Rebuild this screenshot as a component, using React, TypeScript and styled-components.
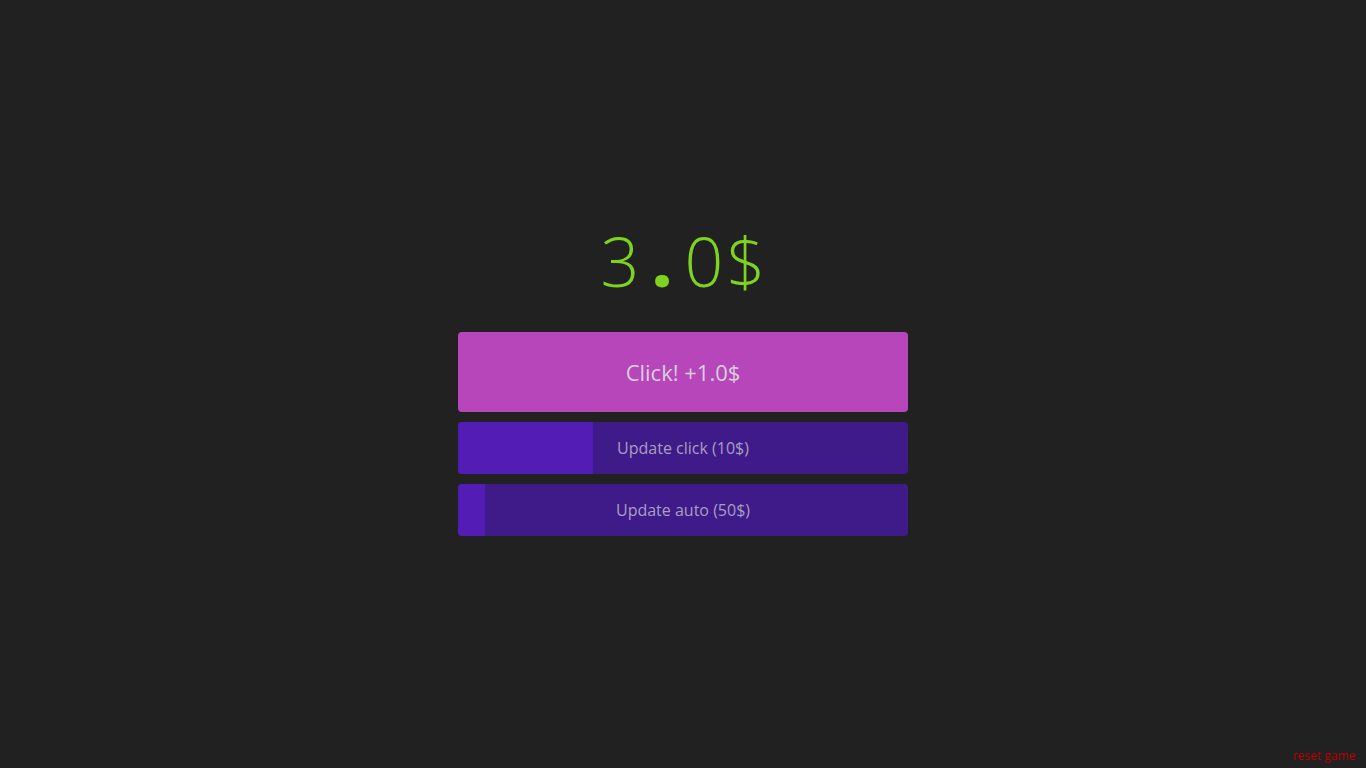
import React from "react";
import styled, { createGlobalStyle } from "styled-components";

const Global = createGlobalStyle`
  html, body { margin: 0; padding: 0; background: #212121; }
  body { font-family: "Open Sans", "Noto Sans", sans-serif; }
`;

const Page = styled.main`
  min-height: 100vh;
  display: flex;
  flex-direction: column;
  align-items: center;
  justify-content: center;
`;

const Money = styled.div`
  display: flex;
  font-family: "Open Sans", "Noto Sans", sans-serif;
  font-weight: 300;
  font-size: 68px;
  line-height: 58px;
  color: #7ed321;
  margin-bottom: 42px;
`;

const Cell = styled.span<{ $dot?: boolean }>`
  width: 42px;
  text-align: center;
  font-weight: ${(p) => (p.$dot ? 800 : 300)};
`;

const Stack = styled.div`
  width: 450px;
  display: flex;
  flex-direction: column;
  gap: 10px;
`;

const ClickButton = styled.button`
  height: 80px;
  border: none;
  border-radius: 4px;
  background: #b746bb;
  color: #d6cfd8;
  font-family: "Open Sans", sans-serif;
  font-size: 22px;
  cursor: pointer;
`;

const UpgradeButton = styled.button`
  position: relative;
  height: 52px;
  border: none;
  border-radius: 4px;
  background: #3f1a89;
  color: #a99fc0;
  font-family: "Open Sans", sans-serif;
  font-size: 16px;
  overflow: hidden;
  cursor: pointer;
  padding: 0;
`;

const Progress = styled.span`
  position: absolute;
  left: 0;
  top: 0;
  bottom: 0;
  background: #521cb5;
`;

const Label = styled.span`
  position: relative;
`;

const Reset = styled.a`
  position: fixed;
  right: 10px;
  bottom: 4px;
  color: #c40000;
  font-size: 12px;
  font-family: "Open Sans", sans-serif;
  text-decoration: none;
`;

export default function App() {
  const money = 3;
  const text = `${money.toFixed(1)}$`;
  return (
    <>
      <Global />
      <Page>
        <Money aria-label={text}>
          {text.split("").map((c, i) => (
            <Cell key={i} $dot={c === "."}>
              {c}
            </Cell>
          ))}
        </Money>
        <Stack>
          <ClickButton>Click! +1.0$</ClickButton>
          <UpgradeButton>
            <Progress style={{ width: `${(money / 10) * 100}%` }} />
            <Label>Update click (10$)</Label>
          </UpgradeButton>
          <UpgradeButton>
            <Progress style={{ width: `${(money / 50) * 100}%` }} />
            <Label>Update auto (50$)</Label>
          </UpgradeButton>
        </Stack>
      </Page>
      <Reset href="#">reset game</Reset>
    </>
  );
}
